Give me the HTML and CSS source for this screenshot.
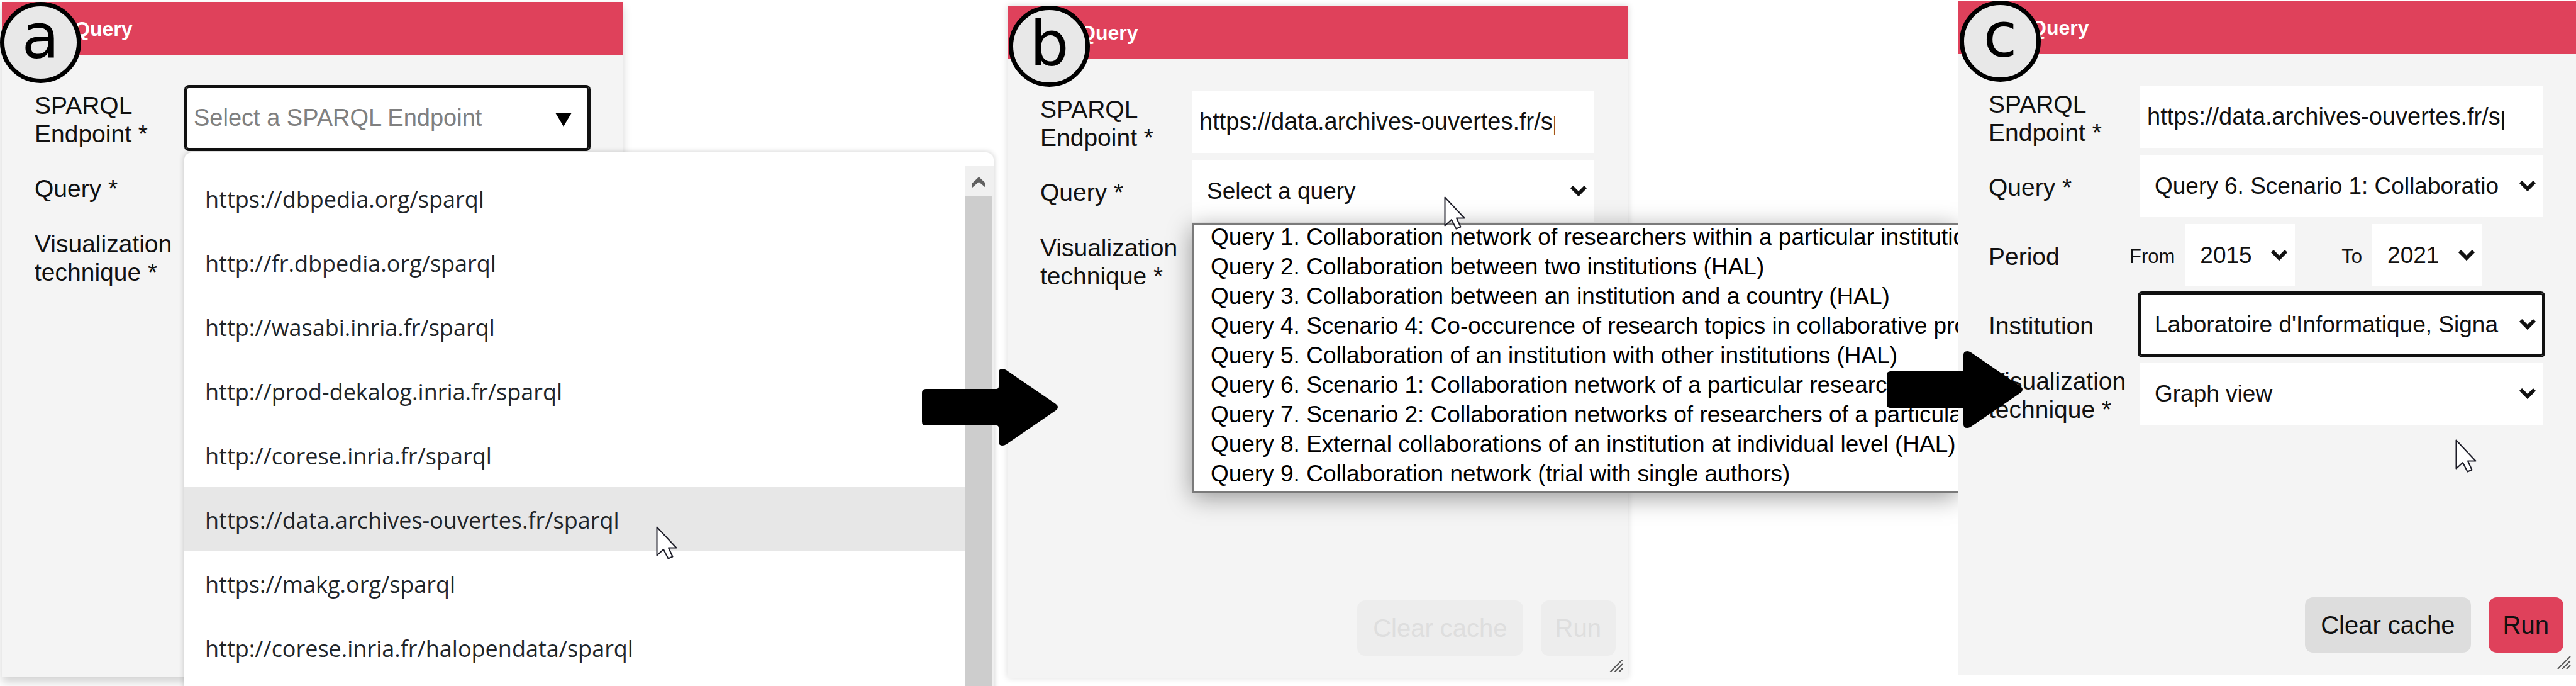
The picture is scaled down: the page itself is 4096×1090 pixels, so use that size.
FILE: index.html
```html
<!DOCTYPE html>
<html lang="en">
<head>
<meta charset="utf-8">
<title>Query panel</title>
<link rel="stylesheet" href="styles.css">
</head>
<body>
<svg class="sprite" aria-hidden="true">
  <symbol id="pointer" viewBox="0 0 34 54"><path d="M1.5 2.5V47.500L12 38L19.500 52.500L26.500 49.500L20 35.500H32.500Z" fill="#fff" stroke="#1d1d28" stroke-width="2" stroke-linejoin="round"/></symbol>
  <symbol id="arrow" viewBox="0 0 216 122"><path d="M6 32H118Q122 32 122 28V6Q122 0 128 0Q131 0 134 2L213 56Q219 61 213 66L134 120Q131 122 128 122Q122 122 122 116V94Q122 90 118 90H6Q0 90 0 84V38Q0 32 6 32Z" fill="#000"/></symbol>
  <symbol id="grip" viewBox="0 0 22 20"><path d="M1 20L21 0M8 20L21 7M15 20L21 14" fill="none" stroke="#555" stroke-width="2"/></symbol>
</svg>
<main class="stage">
  <section class="panel panel--a">
    <header class="panel__head"><h2 class="panel__title">Query</h2></header>
    <span class="badge">a</span>
    <form class="form">
      <label class="label" for="a-endpoint">SPARQL<br>Endpoint *</label>
      <div class="control">
        <input class="field field--focus" id="a-endpoint" type="text" placeholder="Select a SPARQL Endpoint">
        <svg class="triangle" viewBox="0 0 26 22"><path d="M0 0H26L13 22Z"/></svg>
        <div class="suggest">
          <ul class="suggest__list">
            <li class="suggest__item">https://dbpedia.org/sparql</li>
            <li class="suggest__item">http://fr.dbpedia.org/sparql</li>
            <li class="suggest__item">http://wasabi.inria.fr/sparql</li>
            <li class="suggest__item">http://prod-dekalog.inria.fr/sparql</li>
            <li class="suggest__item">http://corese.inria.fr/sparql</li>
            <li class="suggest__item suggest__item--active">https://data.archives-ouvertes.fr/sparql</li>
            <li class="suggest__item">https://makg.org/sparql</li>
            <li class="suggest__item">http://corese.inria.fr/halopendata/sparql</li>
          </ul>
          <div class="scroll">
            <svg class="scroll__up" viewBox="0 0 46 48"><path d="M12 34V27L22.500 17L33 27V34L22.500 25Z" fill="#606060"/></svg>
            <div class="scroll__thumb"></div>
          </div>
        </div>
      </div>
      <span class="label">Query *</span>
      <span class="control"></span>
      <span class="label">Visualization<br>technique *</span>
    </form>
    <svg class="pointer pointer--a"><use href="#pointer"/></svg>
  </section>

  <div class="step step--one"><svg class="step__arrow"><use href="#arrow"/></svg></div>

  <section class="panel panel--b">
    <header class="panel__head"><h2 class="panel__title">Query</h2></header>
    <span class="badge badge--ascender">b</span>
    <form class="form">
      <label class="label" for="b-endpoint">SPARQL<br>Endpoint *</label>
      <div class="control"><input class="field" id="b-endpoint" type="text" value="https://data.archives-ouvertes.fr/sparql"></div>
      <label class="label" for="b-query">Query *</label>
      <div class="control">
        <select class="field field--select" id="b-query"><option>Select a query</option></select>
        <svg class="chevron" viewBox="0 0 28 18"><path d="M3 3L14 14L25 3"/></svg>
        <ul class="options">
          <li>Query 1. Collaboration network of researchers within a particular institutio</li>
          <li>Query 2. Collaboration between two institutions (HAL)</li>
          <li>Query 3. Collaboration between an institution and a country (HAL)</li>
          <li>Query 4. Scenario 4: Co-occurence of research topics in collaborative pro</li>
          <li>Query 5. Collaboration of an institution with other institutions (HAL)</li>
          <li>Query 6. Scenario 1: Collaboration network of a particular research</li>
          <li>Query 7. Scenario 2: Collaboration networks of researchers of a particular</li>
          <li>Query 8. External collaborations of an institution at individual level (HAL)</li>
          <li>Query 9. Collaboration network (trial with single authors)</li>
        </ul>
      </div>
      <span class="label">Visualization<br>technique *</span>
    </form>
    <footer class="actions">
      <button class="button" type="button" disabled>Clear cache</button>
      <button class="button button--run" type="button" disabled>Run</button>
    </footer>
    <svg class="grip"><use href="#grip"/></svg>
    <svg class="pointer pointer--b"><use href="#pointer"/></svg>
  </section>

  <div class="step step--two"><svg class="step__arrow"><use href="#arrow"/></svg></div>

  <section class="panel panel--c">
    <header class="panel__head"><h2 class="panel__title">Query</h2></header>
    <span class="badge">c</span>
    <form class="form">
      <label class="label" for="c-endpoint">SPARQL<br>Endpoint *</label>
      <div class="control"><input class="field" id="c-endpoint" type="text" value="https://data.archives-ouvertes.fr/sparql"></div>
      <label class="label" for="c-query">Query *</label>
      <div class="control">
        <select class="field field--select" id="c-query"><option>Query 6. Scenario 1: Collaboration network of a particular researcher</option></select>
        <svg class="chevron" viewBox="0 0 28 18"><path d="M3 3L14 14L25 3"/></svg>
      </div>
      <span class="label">Period</span>
      <div class="period">
        <label class="period__label" for="c-from">From</label>
        <div class="control control--year">
          <select class="field field--year" id="c-from"><option>2015</option></select>
          <svg class="chevron" viewBox="0 0 28 18"><path d="M3 3L14 14L25 3"/></svg>
        </div>
        <label class="period__label period__label--to" for="c-to">To</label>
        <div class="control control--year">
          <select class="field field--year" id="c-to"><option>2021</option></select>
          <svg class="chevron" viewBox="0 0 28 18"><path d="M3 3L14 14L25 3"/></svg>
        </div>
      </div>
      <label class="label" for="c-institution">Institution</label>
      <div class="control">
        <select class="field field--select field--focus" id="c-institution"><option>Laboratoire d'Informatique, Signaux et Systèmes</option></select>
        <svg class="chevron" viewBox="0 0 28 18"><path d="M3 3L14 14L25 3"/></svg>
      </div>
      <label class="label" for="c-view">Visualization<br>technique *</label>
      <div class="control">
        <select class="field field--select" id="c-view"><option>Graph view</option></select>
        <svg class="chevron" viewBox="0 0 28 18"><path d="M3 3L14 14L25 3"/></svg>
      </div>
    </form>
    <footer class="actions">
      <button class="button" type="button">Clear cache</button>
      <button class="button button--run" type="button">Run</button>
    </footer>
    <svg class="grip"><use href="#grip"/></svg>
    <svg class="pointer pointer--c"><use href="#pointer"/></svg>
  </section>
</main>
</body>
</html>
```

FILE: styles.css
```css
* { box-sizing: border-box; }

body {
  margin: 0;
  background: #fff;
  color: #111;
  font-family: "Liberation Sans", Arial, sans-serif;
  font-size: 39px;
  line-height: 45px;
}

.sprite { position: absolute; width: 0; height: 0; }

.stage {
  display: grid;
  grid-template-columns: 987fr 612fr 987fr 525fr 982fr;
  min-height: 100vh;
  padding-left: 3px;
  overflow: hidden;
}

/* Panels */
.panel {
  position: relative;
  display: flex;
  flex-direction: column;
  background: #f4f4f4;
}
.panel--a { margin: 3px 0 14px; z-index: 1; box-shadow: 0 8px 14px rgba(0, 0, 0, 0.18); }
.panel--b { margin: 9px 0 13px; z-index: 2; box-shadow: 0 0 10px rgba(0, 0, 0, 0.14); }
.panel--c { margin: 1px 0 18px; z-index: 3; }

.panel__head {
  display: flex;
  align-items: center;
  height: 85px;
  padding-left: 115px;
  background: #df415b;
}
.panel__title {
  margin: 0;
  color: #fff;
  font-size: 32px;
  line-height: 36px;
}

.badge {
  position: absolute;
  top: 0;
  left: 2px;
  display: flex;
  align-items: center;
  justify-content: center;
  width: 129px;
  height: 129px;
  padding-bottom: 20px;
  border: 7px solid #000;
  border-radius: 50%;
  background: #e8e8e8;
  color: #000;
  font-family: "DejaVu Sans", sans-serif;
  font-size: 98px;
  line-height: 1;
}
.badge--ascender { padding-bottom: 8px; }
.panel--a .badge { left: -3px; }

/* Form rows */
.form {
  display: grid;
  grid-template-columns: 241px 1fr;
  grid-auto-rows: 99px;
  row-gap: 11px;
  padding: 50px 54px 0 52px;
}
.panel--c .form { padding: 50px 52px 0 48px; grid-template-columns: 240px 1fr; }

.label { align-self: center; padding-top: 4px; }
.control { position: relative; display: block; }

.field {
  display: block;
  width: 100%;
  height: 100%;
  margin: 0;
  padding: 0 62px 0 12px;
  border: 0;
  border-radius: 0;
  outline: 0;
  background: #fff;
  color: #111;
  font: 38px "Liberation Sans", Arial, sans-serif;
  appearance: none;
}
.field::placeholder { color: #808080; opacity: 1; }
.field--select { padding: 0 70px 0 24px; font-size: 37px; }
.field--year { padding: 0 40px 0 24px; font-size: 37px; }
.field--focus { border-radius: 4px; box-shadow: 0 0 0 3px #101010, inset 0 0 0 2px #101010; }

.chevron {
  position: absolute;
  top: 40px;
  right: 11px;
  width: 28px;
  height: 18px;
  fill: none;
  stroke: #111;
  stroke-width: 6;
}
.triangle {
  position: absolute;
  top: 41px;
  right: 27px;
  width: 26px;
  height: 22px;
}

.period {
  display: flex;
  align-items: stretch;
  gap: 16px;
  margin-left: -16px;
}
.period__label {
  align-self: center;
  padding-top: 4px;
  font-size: 31px;
  line-height: 36px;
}
.period__label--to { margin-left: 58px; }
.control--year { width: 175px; }

/* Endpoint suggestions */
.suggest {
  position: absolute;
  top: 104px;
  left: -3px;
  z-index: 2;
  display: flex;
  width: 1287px;
  height: 900px;
  padding-top: 22px;
  border-radius: 12px;
  background: #fff;
  box-shadow: 0 0 10px rgba(0, 0, 0, 0.22);
}
.suggest__list {
  flex: 1;
  margin: 0;
  padding: 0;
  list-style: none;
  color: #212529;
  font-family: "Open Sans", "Noto Sans", sans-serif;
  font-size: 36px;
}
.suggest__item {
  padding: 4px 0 0 33px;
  line-height: 98px;
}
.suggest__item--active { background: #e7e7e7; }
.scroll { width: 46px; background: #f0f0f0; }
.scroll__up { display: block; width: 46px; height: 48px; }
.scroll__thumb { width: 43px; height: 100%; background: #cdcdcd; }

/* Open query list */
.options {
  position: absolute;
  top: 100px;
  left: 0;
  width: 1218px;
  margin: 0;
  padding: 0 0 0 27px;
  overflow: hidden;
  border: 3px solid #7a7a7a;
  border-right: 0;
  background: #fff;
  box-shadow: 0 8px 36px rgba(0, 0, 0, 0.38);
  color: #000;
  font-size: 37px;
  line-height: 39px;
  list-style: none;
  white-space: nowrap;
}
.options li { padding-bottom: 8px; }

/* Actions */
.actions {
  display: flex;
  justify-content: flex-end;
  gap: 28px;
  margin-top: auto;
  padding: 0 20px 35px;
}
.button {
  height: 88px;
  padding: 0 25px;
  border: 0;
  border-radius: 13px;
  background: #ddd;
  color: #111;
  font: 40px "Liberation Sans", Arial, sans-serif;
}
.button--run { padding: 0 23px; background: #df415b; }
.button:disabled { background: #ededed; color: #dedede; }

.grip {
  position: absolute;
  right: 8px;
  bottom: 9px;
  width: 22px;
  height: 20px;
}

/* Mouse pointers and step arrows */
.pointer {
  position: absolute;
  z-index: 5;
  width: 34px;
  height: 54px;
}
.pointer--a { left: 1040px; top: 832px; }
.pointer--b { left: 694px; top: 302px; }
.pointer--c { left: 790px; top: 696px; }

.step { position: relative; z-index: 4; }
.step__arrow {
  position: absolute;
  width: 216px;
  height: 122px;
}
.step--one .step__arrow { left: 476px; top: 586px; }
.step--two .step__arrow { left: 411px; top: 558px; }
```
